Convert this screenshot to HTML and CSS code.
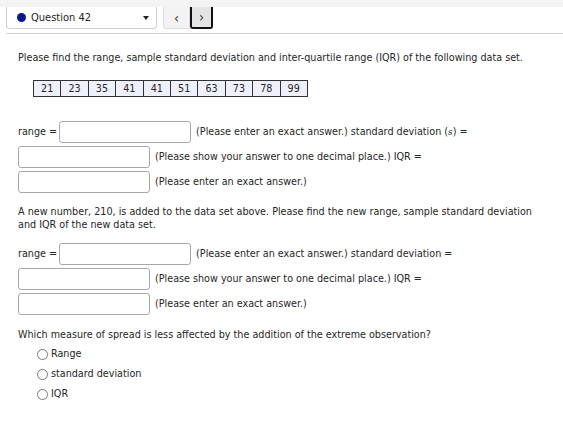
FILE: index.html
```html
<!DOCTYPE html>
<html>
<head>
<meta charset="utf-8">
<link rel="stylesheet" href="styles.css">
</head>
<body>
<div class="strip"></div>
<div class="header">
  <div class="select">
    <span class="dot"></span>
    <span class="qlabel">Question 42</span>
    <span class="caret"></span>
  </div>
  <div class="navbtn prev">&lsaquo;</div>
  <div class="navbtn next">&rsaquo;</div>
</div>
<div class="content">
  <p class="q">Please find the range, sample standard deviation and inter-quartile range (IQR) of the following data set.</p>
  <table class="data">
    <tr><td>21</td><td>23</td><td>35</td><td>41</td><td>41</td><td>51</td><td>63</td><td>73</td><td>78</td><td>99</td></tr>
  </table>
  <div class="answers first">
    <div class="row"><span class="lbl">range =</span><span class="box wide"></span><span class="txt">(Please enter an exact answer.) standard deviation (<i class="s">s</i>) =</span></div>
    <div class="row"><span class="box"></span><span class="txt">(Please show your answer to one decimal place.) IQR =</span></div>
    <div class="row"><span class="box"></span><span class="txt">(Please enter an exact answer.)</span></div>
  </div>
  <p class="q2">A new number, 210, is added to the data set above. Please find the new range, sample standard deviation and IQR of the new data set.</p>
  <div class="answers second">
    <div class="row"><span class="lbl">range =</span><span class="box wide"></span><span class="txt">(Please enter an exact answer.) standard deviation =</span></div>
    <div class="row"><span class="box"></span><span class="txt">(Please show your answer to one decimal place.) IQR =</span></div>
    <div class="row"><span class="box"></span><span class="txt">(Please enter an exact answer.)</span></div>
  </div>
  <p class="q3">Which measure of spread is less affected by the addition of the extreme observation?</p>
  <div class="options">
    <div class="opt"><span class="radio"></span>Range</div>
    <div class="opt"><span class="radio"></span>standard deviation</div>
    <div class="opt"><span class="radio"></span>IQR</div>
  </div>
</div>
</body>
</html>
```
FILE: styles.css
```css
html, body { margin: 0; padding: 0; background: #fff; }
body {
  font-family: "DejaVu Sans", sans-serif;
  font-stretch: condensed;
  font-size: 10.7px;
  color: #262626;
  line-height: 14px;
}
.strip { height: 7px; background: #f4f4f4; }
.header {
  display: flex;
  align-items: flex-start;
  margin-left: 6px;
  height: 26px;
  border-bottom: 1px solid #d4d4d4;
}
.select {
  box-sizing: border-box;
  width: 151px;
  height: 22px;
  border: 1px solid #d0d0d0;
  border-top: none;
  border-radius: 0 0 4px 4px;
  display: flex;
  align-items: center;
  padding-left: 10px;
}
.dot { width: 9px; height: 9px; border-radius: 50%; background: #0a1a8c; margin-right: 5px; }
.qlabel { color: #222; font-size: 11px; }
.caret {
  margin-left: auto;
  margin-right: 7px;
  width: 0; height: 0;
  border-left: 3px solid transparent;
  border-right: 3px solid transparent;
  border-top: 4px solid #222;
}
.navbtn {
  box-sizing: border-box;
  height: 22px;
  display: flex;
  align-items: center;
  justify-content: center;
  font-size: 14px;
  color: #333;
}
.prev {
  margin-left: 6px;
  width: 27px;
  background: #f3f3f3;
  border: 1px solid #dcdcdc;
  border-top: none;
  border-radius: 0 0 0 3px;
}
.next {
  width: 23px;
  background: #e4e4e4;
  border: 2px solid #111;
  border-top: none;
  border-radius: 0 0 3px 3px;
}
.content { padding-left: 18px; padding-right: 10px; }
.q { margin: 17px 0 0; }
.data {
  border-collapse: collapse;
  margin: 15px 0 0 15px;
}
.data td {
  border: 1px solid #333;
  background: #eef0fb;
  width: 26.4px;
  height: 15px;
  padding: 0;
  text-align: center;
  line-height: 15px;
}
.answers { display: flex; flex-direction: column; gap: 3px; }
.answers.first { margin-top: 24px; }
.answers.second { margin-top: 12px; }
.row { display: flex; align-items: center; height: 22px; }
.lbl { margin-right: 2px; }
.box {
  box-sizing: border-box;
  width: 132px;
  height: 22px;
  border: 1px solid #a8a8a8;
  border-radius: 3px;
  background: #fff;
}
.txt { margin-left: 5px; }
.s { font-family: "DejaVu Serif", serif; font-style: italic; font-size: 10px; }
.q2 { margin: 12px 0 0; line-height: 13px; }
.q3 { margin: 13px 0 0; }
.options { padding-left: 19px; margin-top: 5px; display: flex; flex-direction: column; gap: 6px; }
.opt { display: flex; align-items: center; height: 14px; }
.radio {
  box-sizing: border-box;
  width: 11px; height: 11px;
  border: 1px solid #777;
  border-radius: 50%;
  margin-right: 3px;
}
```
